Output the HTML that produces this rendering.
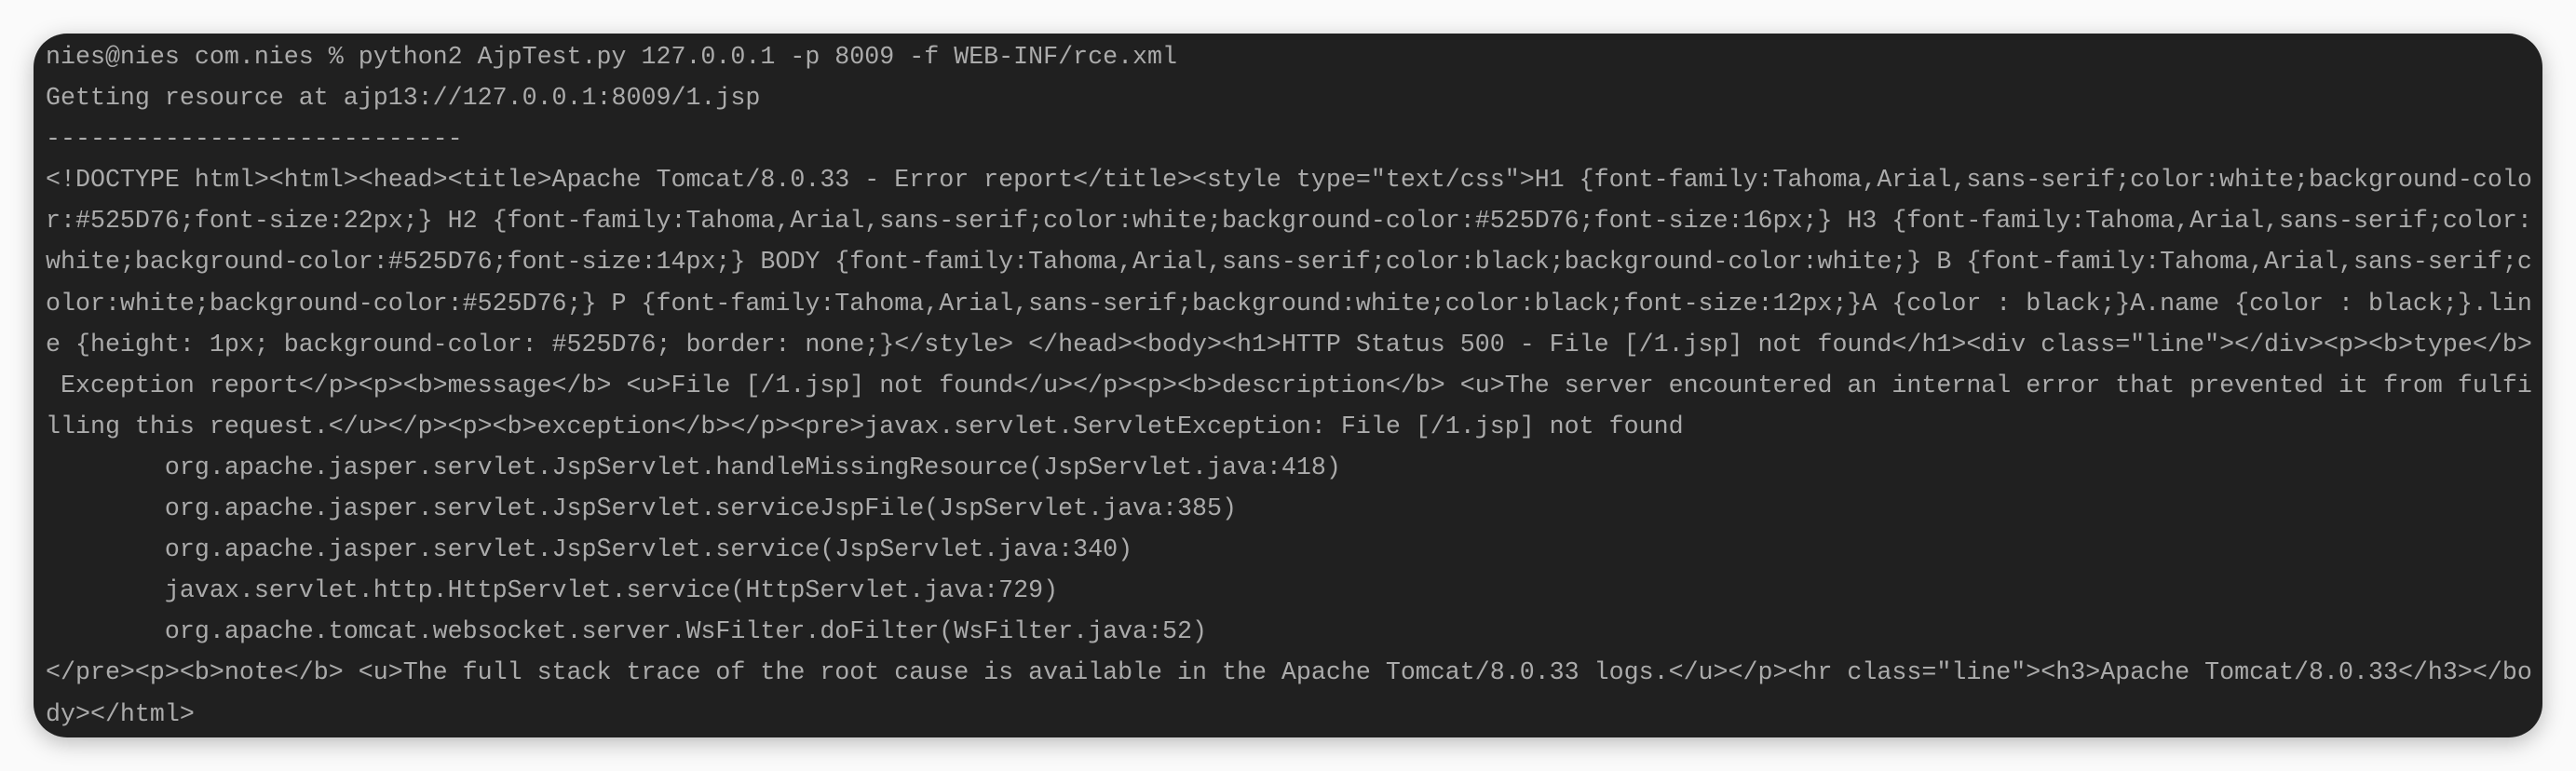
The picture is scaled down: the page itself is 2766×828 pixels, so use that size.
<!DOCTYPE html>
<html><head><meta charset="utf-8"><style>
html,body{margin:0;padding:0;background:#fafafa;width:2766px;height:828px;overflow:hidden}
.term{position:absolute;left:36px;top:36px;width:2694px;height:756px;background:#202020;border-radius:36px;box-shadow:0 6px 24px rgba(0,0,0,0.25)}
pre{position:absolute;left:49px;top:40px;margin:0;font-family:"Liberation Mono",monospace;font-size:26.65px;line-height:44.1px;color:#ababab;white-space:pre}
</style></head><body>
<div class="term"></div>
<pre>nies@nies com.nies % python2 AjpTest.py 127.0.0.1 -p 8009 -f WEB-INF/rce.xml
Getting resource at ajp13://127.0.0.1:8009/1.jsp
----------------------------
&lt;!DOCTYPE html&gt;&lt;html&gt;&lt;head&gt;&lt;title&gt;Apache Tomcat/8.0.33 - Error report&lt;/title&gt;&lt;style type="text/css"&gt;H1 {font-family:Tahoma,Arial,sans-serif;color:white;background-colo
r:#525D76;font-size:22px;} H2 {font-family:Tahoma,Arial,sans-serif;color:white;background-color:#525D76;font-size:16px;} H3 {font-family:Tahoma,Arial,sans-serif;color:
white;background-color:#525D76;font-size:14px;} BODY {font-family:Tahoma,Arial,sans-serif;color:black;background-color:white;} B {font-family:Tahoma,Arial,sans-serif;c
olor:white;background-color:#525D76;} P {font-family:Tahoma,Arial,sans-serif;background:white;color:black;font-size:12px;}A {color : black;}A.name {color : black;}.lin
e {height: 1px; background-color: #525D76; border: none;}&lt;/style&gt; &lt;/head&gt;&lt;body&gt;&lt;h1&gt;HTTP Status 500 - File [/1.jsp] not found&lt;/h1&gt;&lt;div class="line"&gt;&lt;/div&gt;&lt;p&gt;&lt;b&gt;type&lt;/b&gt;
 Exception report&lt;/p&gt;&lt;p&gt;&lt;b&gt;message&lt;/b&gt; &lt;u&gt;File [/1.jsp] not found&lt;/u&gt;&lt;/p&gt;&lt;p&gt;&lt;b&gt;description&lt;/b&gt; &lt;u&gt;The server encountered an internal error that prevented it from fulfi
lling this request.&lt;/u&gt;&lt;/p&gt;&lt;p&gt;&lt;b&gt;exception&lt;/b&gt;&lt;/p&gt;&lt;pre&gt;javax.servlet.ServletException: File [/1.jsp] not found
        org.apache.jasper.servlet.JspServlet.handleMissingResource(JspServlet.java:418)
        org.apache.jasper.servlet.JspServlet.serviceJspFile(JspServlet.java:385)
        org.apache.jasper.servlet.JspServlet.service(JspServlet.java:340)
        javax.servlet.http.HttpServlet.service(HttpServlet.java:729)
        org.apache.tomcat.websocket.server.WsFilter.doFilter(WsFilter.java:52)
&lt;/pre&gt;&lt;p&gt;&lt;b&gt;note&lt;/b&gt; &lt;u&gt;The full stack trace of the root cause is available in the Apache Tomcat/8.0.33 logs.&lt;/u&gt;&lt;/p&gt;&lt;hr class="line"&gt;&lt;h3&gt;Apache Tomcat/8.0.33&lt;/h3&gt;&lt;/bo
dy&gt;&lt;/html&gt;</pre>
</body></html>
